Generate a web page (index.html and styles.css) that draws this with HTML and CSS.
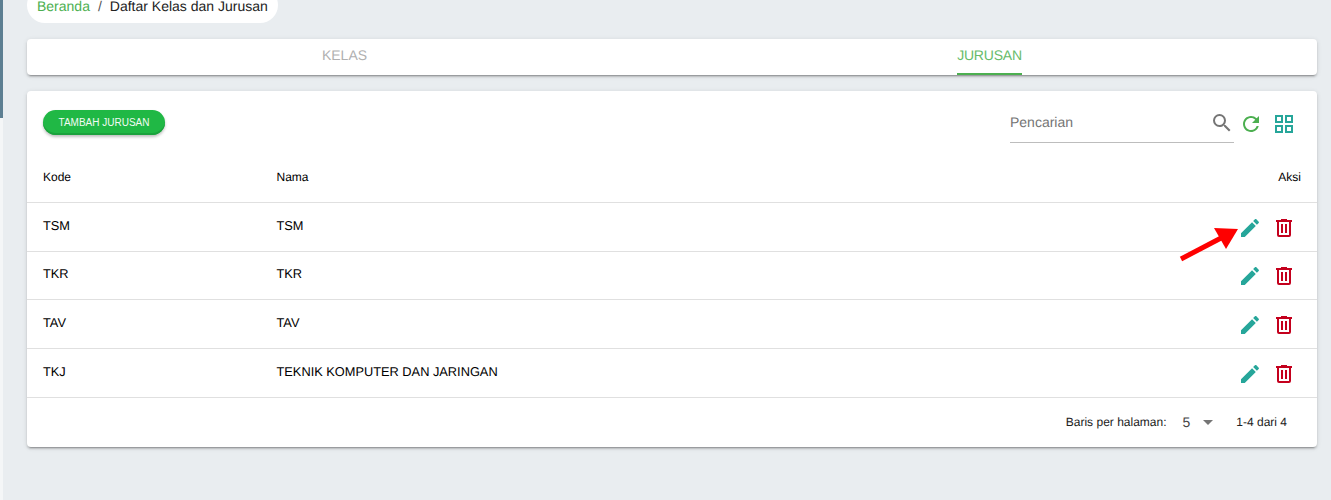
FILE: index.html
```html
<!DOCTYPE html>
<html lang="id">
<head>
<meta charset="utf-8">
<title>Daftar Kelas dan Jurusan</title>
<link rel="stylesheet" href="styles.css">
</head>
<body>
<div class="page">
  <aside class="rail"><div class="rail-fill"></div></aside>
  <main class="main">
    <nav class="crumbs"><a class="crumb-link">Beranda</a><span class="crumb-sep">/</span><span>Daftar Kelas dan Jurusan</span></nav>
    <div class="tabs">
      <div class="tab"><span class="tab-label">KELAS</span></div>
      <div class="tab tab-active"><span class="tab-label">JURUSAN</span></div>
    </div>
    <section class="card">
      <div class="toolbar">
        <button class="add-btn">TAMBAH JURUSAN</button>
        <div class="tools">
          <div class="search">
            <span class="search-text">Pencarian</span>
            <svg class="icon icon-search" viewBox="0 0 24 24"><path d="M15.5 14h-.79l-.28-.27A6.471 6.471 0 0 0 16 9.5 6.5 6.5 0 1 0 9.5 16c1.61 0 3.09-.59 4.23-1.57l.27.28v.79l5 4.99L20.49 19l-4.99-5zm-6 0C7.01 14 5 11.99 5 9.5S7.01 5 9.5 5 14 7.01 14 9.5 11.99 14 9.5 14z"/></svg>
          </div>
          <svg class="icon icon-refresh" viewBox="0 0 24 24"><path d="M17.65 6.35A7.958 7.958 0 0 0 12 4c-4.42 0-7.99 3.58-7.99 8s3.57 8 7.99 8c3.73 0 6.84-2.55 7.73-6h-2.08A5.99 5.99 0 0 1 12 18c-3.31 0-6-2.69-6-6s2.69-6 6-6c1.66 0 3.14.69 4.22 1.78L13 11h7V4l-2.35 2.35z"/></svg>
          <svg class="icon icon-grid" viewBox="0 0 24 24"><path d="M3 11h8V3H3m2 2h4v4H5M13 21h8v-8h-8m2 2h4v4h-4M3 21h8v-8H3m2 2h4v4H5M13 3v8h8V3m-2 6h-4V5h4z"/></svg>
        </div>
      </div>
      <table class="table">
        <thead>
          <tr><th class="col-code">Kode</th><th>Nama</th><th class="col-act">Aksi</th></tr>
        </thead>
        <tbody>
          <tr><td>TSM</td><td>TSM</td><td class="col-act"><div class="actions"><svg class="icon icon-edit" viewBox="0 0 24 24"><path d="M3 17.25V21h3.75L17.81 9.94l-3.75-3.75L3 17.25zM20.71 7.04c.39-.39.39-1.02 0-1.41l-2.34-2.34c-.39-.39-1.02-.39-1.41 0l-1.83 1.83 3.75 3.75 1.83-1.83z"/></svg><svg class="icon icon-trash" viewBox="0 0 24 24"><path d="M9 3v1H4v2h1v13a2 2 0 0 0 2 2h10a2 2 0 0 0 2-2V6h1V4h-5V3H9M7 6h10v13H7V6m2 2v9h2V8H9m4 0v9h2V8h-2z"/></svg></div></td></tr>
          <tr><td>TKR</td><td>TKR</td><td class="col-act"><div class="actions"><svg class="icon icon-edit" viewBox="0 0 24 24"><path d="M3 17.25V21h3.75L17.81 9.94l-3.75-3.75L3 17.25zM20.71 7.04c.39-.39.39-1.02 0-1.41l-2.34-2.34c-.39-.39-1.02-.39-1.41 0l-1.83 1.83 3.75 3.75 1.83-1.83z"/></svg><svg class="icon icon-trash" viewBox="0 0 24 24"><path d="M9 3v1H4v2h1v13a2 2 0 0 0 2 2h10a2 2 0 0 0 2-2V6h1V4h-5V3H9M7 6h10v13H7V6m2 2v9h2V8H9m4 0v9h2V8h-2z"/></svg></div></td></tr>
          <tr><td>TAV</td><td>TAV</td><td class="col-act"><div class="actions"><svg class="icon icon-edit" viewBox="0 0 24 24"><path d="M3 17.25V21h3.75L17.81 9.94l-3.75-3.75L3 17.25zM20.71 7.04c.39-.39.39-1.02 0-1.41l-2.34-2.34c-.39-.39-1.02-.39-1.41 0l-1.83 1.83 3.75 3.75 1.83-1.83z"/></svg><svg class="icon icon-trash" viewBox="0 0 24 24"><path d="M9 3v1H4v2h1v13a2 2 0 0 0 2 2h10a2 2 0 0 0 2-2V6h1V4h-5V3H9M7 6h10v13H7V6m2 2v9h2V8H9m4 0v9h2V8h-2z"/></svg></div></td></tr>
          <tr><td>TKJ</td><td>TEKNIK KOMPUTER DAN JARINGAN</td><td class="col-act"><div class="actions"><svg class="icon icon-edit" viewBox="0 0 24 24"><path d="M3 17.25V21h3.75L17.81 9.94l-3.75-3.75L3 17.25zM20.71 7.04c.39-.39.39-1.02 0-1.41l-2.34-2.34c-.39-.39-1.02-.39-1.41 0l-1.83 1.83 3.75 3.75 1.83-1.83z"/></svg><svg class="icon icon-trash" viewBox="0 0 24 24"><path d="M9 3v1H4v2h1v13a2 2 0 0 0 2 2h10a2 2 0 0 0 2-2V6h1V4h-5V3H9M7 6h10v13H7V6m2 2v9h2V8H9m4 0v9h2V8h-2z"/></svg></div></td></tr>
        </tbody>
      </table>
      <div class="pager">
        <span>Baris per halaman:</span>
        <span class="pager-size">5</span>
        <span class="pager-caret"></span>
        <span class="pager-range">1-4 dari 4</span>
      </div>
    </section>
    <svg class="arrow" viewBox="0 0 60 36" width="60" height="36"><path class="arrow-shaft" d="M2 33 L44 11"/><path class="arrow-head" d="M35 2 L59 3 L47 23 Z"/></svg>
  </main>
</div>
</body>
</html>
```

FILE: styles.css
```css
* { box-sizing: border-box; }
html, body { margin: 0; height: 500px; overflow: hidden; }
body {
  background: #e9edf0;
  color: #000;
  font-family: "Liberation Sans", Arial, sans-serif;
  text-rendering: geometricPrecision;
}
.page { display: flex; height: 500px; }
.rail { flex: 0 0 3px; background: #f4f6f7; }
.rail-fill { height: 118px; background: #5d7f92; }
.main { flex: 1; position: relative; padding: 0 14px 0 24px; min-width: 0; }

.crumbs {
  display: inline-flex;
  align-items: center;
  height: 36px;
  margin-top: -13px;
  padding: 2px 10px 0;
  background: #fff;
  border-radius: 18px;
  font-size: 14px;
  color: #222;
  vertical-align: top;
}
.crumb-link { color: #4caf50; }
.crumb-sep { margin: 0 8px; color: #555; }

.tabs {
  display: flex;
  height: 36px;
  margin-top: 16px;
  background: #fff;
  border-radius: 4px;
  box-shadow: 0 3px 1px -2px rgba(0,0,0,.2), 0 2px 2px 0 rgba(0,0,0,.14), 0 1px 5px 0 rgba(0,0,0,.12);
}
.tab { flex: 1; display: flex; justify-content: center; font-size: 14px; color: #b0b0b0; }
.tab-label { height: 36px; line-height: 32px; margin-right: 10px; border-bottom: 2px solid transparent; }
.tab-active { color: #66bb6a; }
.tab-active .tab-label { border-bottom-color: #4caf50; letter-spacing: -.2px; }

.card {
  margin-top: 16px;
  height: 356px;
  background: #fff;
  border-radius: 4px;
  box-shadow: 0 3px 1px -2px rgba(0,0,0,.2), 0 2px 2px 0 rgba(0,0,0,.14), 0 1px 5px 0 rgba(0,0,0,.12);
}
.toolbar {
  display: flex;
  justify-content: space-between;
  padding: 19px 21px 0 16px;
  height: 63px;
}
.add-btn {
  width: 122px;
  height: 25px;
  padding: 0 0 1px;
  border: 0;
  border-radius: 13px;
  background: #20b845;
  color: #f2fbf4;
  font: 10px "Liberation Sans", Arial, sans-serif;
  box-shadow: inset 0 -2px 0 #1ba23d, 0 2px 3px rgba(0,0,0,.25);
}
.tools { display: flex; align-items: flex-start; }
.search {
  display: flex;
  justify-content: space-between;
  align-items: center;
  width: 224px;
  height: 34px;
  margin-top: -1px;
  margin-right: 5px;
  border-bottom: 1px solid #bdbdbd;
  font-size: 14px;
  color: #757575;
}
.search-text { position: relative; top: -4px; }
.icon { display: block; width: 24px; height: 24px; flex: none; }
.icon-search { fill: #757575; position: relative; top: -3px; }
.icon-refresh { fill: #4caf50; margin-top: 2px; }
.icon-grid { fill: #26a69a; margin-top: 2px; margin-left: 9px; }

.table { width: 100%; border-collapse: collapse; table-layout: fixed; }
.table th {
  height: 48px;
  padding: 0 0 1px;
  font-size: 12px;
  font-weight: 400;
  text-align: left;
  border-bottom: 1px solid #e0e0e0;
}
.table td {
  height: 49px;
  padding: 0 0 3px;
  font-size: 12.8px;
  border-bottom: 1px solid #e0e0e0;
}
.table tbody tr:nth-child(2) td { height: 48px; }
.table th:first-child, .table td:first-child { width: 249.5px; padding-left: 16px; }
.table th.col-act, .table td.col-act { width: 120px; padding-right: 16px; text-align: right; }
.table td.col-act { padding-bottom: 0; }
.actions { display: flex; justify-content: flex-end; gap: 10px; padding: 2px 5px 0 0; }
.icon-edit { fill: #26a69a; }
.icon-trash { fill: #c4001d; }

.pager {
  display: flex;
  align-items: center;
  justify-content: flex-end;
  height: 49px;
  padding: 0 30px 1px 0;
  font-size: 12px;
  color: #222;
}
.pager-size { margin-left: 16px; font-size: 14px; color: #444; }
.pager-caret {
  margin: 2px 0 0 13px;
  width: 0;
  height: 0;
  border: 5px solid transparent;
  border-top-color: #757575;
  border-bottom-width: 0;
  border-left-width: 5.5px;
  border-right-width: 5.5px;
}
.pager-range { margin-left: 23px; }

.arrow { position: absolute; left: 1176px; top: 226px; overflow: visible; }
.arrow-shaft { stroke: #fe0000; stroke-width: 5; fill: none; }
.arrow-head { fill: #fe0000; }
```
